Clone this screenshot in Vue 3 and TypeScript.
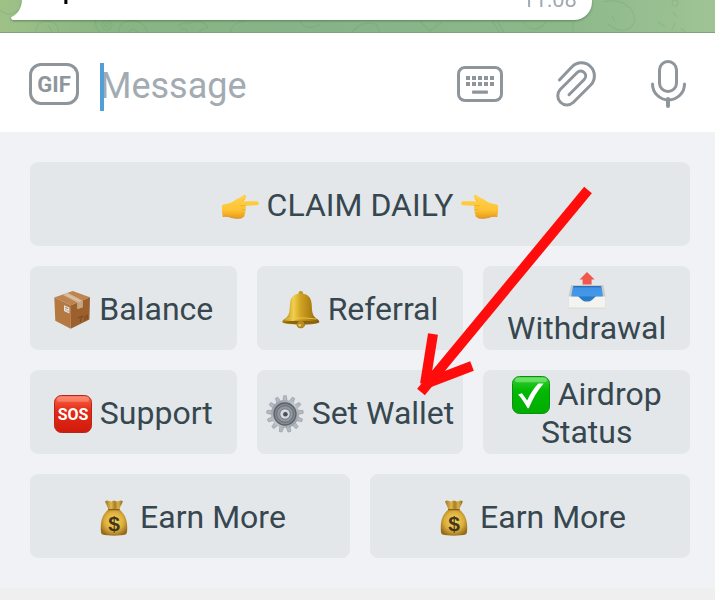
<script setup lang="ts">
import { ref } from 'vue'

interface Mark {
  text: string
  x: number
  y: number
  kind: string
}

interface Key {
  icon: string
  alt: string
  label: string
  mark?: Mark
  trailing?: { icon: string; alt: string }
}

const draft = ref('')

const sosMark: Mark = { text: 'SOS', x: 19, y: 25, kind: 'mark-sos' }
const dollarMark: Mark = { text: '$', x: 20, y: 32, kind: 'mark-dollar' }

const rows: Key[][] = [
  [{ icon: 'point-right', alt: '👉', label: 'CLAIM DAILY', trailing: { icon: 'point-left', alt: '👈' } }],
  [
    { icon: 'package', alt: '📦', label: 'Balance' },
    { icon: 'bell', alt: '🔔', label: 'Referral' },
    { icon: 'outbox', alt: '📤', label: 'Withdrawal' },
  ],
  [
    { icon: 'sos', alt: '🆘', label: 'Support', mark: sosMark },
    { icon: 'gear', alt: '⚙️', label: 'Set Wallet' },
    { icon: 'check', alt: '✅', label: 'Airdrop Status' },
  ],
  [
    { icon: 'bag', alt: '💰', label: 'Earn More', mark: dollarMark },
    { icon: 'bag', alt: '💰', label: 'Earn More', mark: dollarMark },
  ],
]

const teeth: number[] = Array.from({ length: 13 }, (_, i) => (i * 360) / 13)
const keyColumns: number[] = [9, 15, 21, 27, 33]
</script>

<template>
  <main class="screen">
    <svg class="sprites" aria-hidden="true">
      <defs>
        <linearGradient id="g-hand" x1="0" y1="0" x2="0" y2="1">
          <stop offset="0" stop-color="#ffd44a" />
          <stop offset="0.65" stop-color="#fdc334" />
          <stop offset="1" stop-color="#e99a1c" />
        </linearGradient>
        <linearGradient id="g-bell" x1="0" y1="0" x2="1" y2="0">
          <stop offset="0" stop-color="#a87a10" />
          <stop offset="0.3" stop-color="#f1cf4c" />
          <stop offset="0.5" stop-color="#d0a222" />
          <stop offset="0.8" stop-color="#aa7c12" />
          <stop offset="1" stop-color="#7c5508" />
        </linearGradient>
        <linearGradient id="g-red" x1="0" y1="0" x2="0" y2="1">
          <stop offset="0" stop-color="#ff7a62" />
          <stop offset="0.2" stop-color="#f04a30" />
          <stop offset="0.4" stop-color="#e52b16" />
          <stop offset="1" stop-color="#cf1a0c" />
        </linearGradient>
        <linearGradient id="g-green" x1="0" y1="0" x2="0" y2="1">
          <stop offset="0" stop-color="#4fd84c" />
          <stop offset="0.18" stop-color="#1fc51d" />
          <stop offset="0.4" stop-color="#02b803" />
          <stop offset="1" stop-color="#01ad02" />
        </linearGradient>
        <linearGradient id="g-gear" x1="0" y1="0" x2="1" y2="1">
          <stop offset="0" stop-color="#8a9097" />
          <stop offset="0.5" stop-color="#c3c8ce" />
          <stop offset="1" stop-color="#8e949b" />
        </linearGradient>
        <linearGradient id="g-blue" x1="0" y1="0" x2="0" y2="1">
          <stop offset="0" stop-color="#3f93e6" />
          <stop offset="0.5" stop-color="#4597e8" />
          <stop offset="0.6" stop-color="#2878c4" />
          <stop offset="1" stop-color="#2c86d4" />
        </linearGradient>
        <radialGradient id="g-bag" cx="0.5" cy="0.45" r="0.6">
          <stop offset="0" stop-color="#f7d863" />
          <stop offset="0.6" stop-color="#dcae3c" />
          <stop offset="1" stop-color="#94691a" />
        </radialGradient>
        <linearGradient id="g-neck" x1="0" y1="0" x2="1" y2="0">
          <stop offset="0" stop-color="#9b7323" />
          <stop offset="0.35" stop-color="#e0b84e" />
          <stop offset="0.55" stop-color="#a87d28" />
          <stop offset="0.75" stop-color="#dab045" />
          <stop offset="1" stop-color="#8c641a" />
        </linearGradient>
      </defs>

      <symbol id="emoji-point-right" viewBox="0 0 38 38">
        <path d="M1.2 18C4 16.8 8 16.6 11 15.2C14 13.6 16 11.6 19 10.6C21 9.6 22.5 7.6 24 7.8C25.8 8.2 25.2 10.4 24 11.8L21.8 14.2H36C38.4 14.4 38.4 18 36 18.2L24.4 18.7C25.4 20 25.2 21.6 24.2 22.4C25 24 24.6 25.6 23.6 26.4C24 28.4 23.4 30.6 20.6 31C16 31.6 11.6 31.2 8.4 29.8C6.4 29 4 29.4 1.8 29.4C.8 26 .8 21.4 1.2 18Z" fill="url(#g-hand)" />
        <path d="M24.4 18.7H19.5M24.2 22.5H21M23.6 26.5H21M24 11.8L21.4 14.4" fill="none" stroke="#e9a82a" stroke-width="0.7" stroke-linecap="round" />
        <path d="M1.8 29.4C4 29.4 6.4 29 8.4 29.8C11.6 31.2 16 31.6 20.6 31" fill="none" stroke="#dc8c1c" stroke-width="0.9" />
      </symbol>
      <symbol id="emoji-point-left" viewBox="0 0 38 38">
        <use href="#emoji-point-right" width="38" height="38" transform="translate(38 0) scale(-1 1)" />
      </symbol>

      <symbol id="emoji-package" viewBox="0 0 38 38">
        <path d="M19.7 0L37 6.3L18 14.2L1.3 6.5Z" fill="#bd8450" />
        <path d="M1.3 6.5L18 14.2L17.7 37.8L2.3 29.8Z" fill="#b57840" />
        <path d="M37 6.3L18 14.2L17.7 37.8L36.4 28.4Z" fill="#9b602d" />
        <path d="M9.6 3.8L14.6 1.8L29.6 9.4V16.2L24.4 18V11.5Z" fill="#d3b694" />
        <path d="M24.4 11.5L29.6 9.4V16.2L24.4 18Z" fill="#c7a67f" />
        <path d="M12.2 2.8L26.8 10.4" stroke="#dfcab0" stroke-width="0.8" />
        <path d="M11 14.2L16.4 16.4V22.4L11 20Z" fill="#e9e5df" />
        <path d="M12.2 16.4L15.2 17.6M12.2 18.6L13.4 19.1M14.4 19.8L15.6 20.3" stroke="#77706a" stroke-width="0.9" />
        <path d="M25 27L29.6 25.2L27.4 28.6V31M32 24.4V29.4M34.2 23.4V28.4" fill="none" stroke="#6d4320" stroke-width="0.8" />
      </symbol>

      <symbol id="emoji-bell" viewBox="0 0 38 38">
        <rect x="16.5" y="0" width="4.6" height="5" rx="2.2" fill="#c29524" />
        <circle cx="18.8" cy="33" r="4.3" fill="#8a6110" />
        <path d="M18.8 2.6C12 2.6 8.6 6.4 8 12.4C7.4 19 8.2 24 2.6 28C.8 29.2 0 30.2 .4 31.4C6 34.4 31.6 34.4 37.2 31.4C37.6 30.2 36.8 29.2 35 28C29.4 24 30.2 19 29.6 12.4C29 6.4 25.6 2.6 18.8 2.6Z" fill="url(#g-bell)" />
        <path d="M.6 31C7 29.4 30.6 29.4 37 31C31.6 34.2 6 34.2 .6 31Z" fill="#8c640d" />
        <path d="M3.4 28.2C10 26.6 27.6 26.6 34.2 28.2" fill="none" stroke="#e9c752" stroke-width="0.9" />
        <ellipse cx="18.8" cy="33.4" rx="3.6" ry="3.4" fill="#b98c22" />
        <ellipse cx="17.8" cy="34.2" rx="1.4" ry="1.2" fill="#ecca5a" />
      </symbol>

      <symbol id="emoji-outbox" viewBox="0 0 38 38">
        <path d="M3 13H35.4L37.4 24V36.4H.6V24Z" fill="#c9cbc9" />
        <path d="M5 14H33.4L35 24.6L29 27L19 33L9 27L3.2 24.6Z" fill="url(#g-blue)" />
        <path d="M5.6 14H32.8V15.4H5.6Z" fill="#2d70ba" />
        <path d="M.6 24.4H9.6C12.4 24.6 13 29.6 19 29.6C25 29.6 25.6 24.6 28.4 24.4H37.4V35.4Q37.4 36.4 36.4 36.4H1.6Q.6 36.4 .6 35.4Z" fill="#f3f3f0" />
        <path d="M1 36H37" stroke="#d4d4d0" stroke-width="0.8" />
        <path d="M19 0L26.6 7.6H23.6V12.4H14.6V7.6H11.6Z" fill="#f0574f" />
      </symbol>

      <symbol id="emoji-sos" viewBox="0 0 38 38">
        <rect x="0.5" y="0.5" width="37" height="37" rx="7" fill="url(#g-red)" stroke="#b3261a" />
        <rect x="3" y="1.8" width="32" height="5" rx="2.5" fill="#ff9c86" opacity="0.5" />
      </symbol>

      <symbol id="emoji-gear" viewBox="0 0 38 38">
        <path v-for="angle in teeth" :key="angle" d="M16.8 6.4L17.6 .7H20.4L21.2 6.4Z" :transform="`rotate(${angle} 19 19)`" fill="#b4bac1" stroke="#7c828a" stroke-width="0.4" />
        <circle cx="19" cy="19" r="14" fill="url(#g-gear)" />
        <circle cx="19" cy="19" r="11" fill="#858b92" stroke="#5d6269" stroke-width="1.3" />
        <circle cx="19" cy="19" r="8.4" fill="#9298a0" stroke="#666b72" stroke-width="1" />
        <circle cx="19" cy="19" r="5.2" fill="#d6dade" stroke="#6a7077" stroke-width="0.8" />
        <circle cx="19.4" cy="19.2" r="2.3" fill="#4a4f55" />
      </symbol>

      <symbol id="emoji-check" viewBox="0 0 38 38">
        <rect x="0.5" y="0.5" width="37" height="37" rx="7" fill="url(#g-green)" stroke="#0c8f10" />
        <rect x="3" y="1.8" width="32" height="4.4" rx="2.2" fill="#9af096" opacity="0.5" />
        <path d="M6 18.4L10 17.2L15.2 24.6C18 18 22 11.6 26.4 7.4H31.6C25.6 14.4 20.8 22.4 16.8 32.2H15.6C12.8 27 9.8 22.4 6 18.4Z" fill="#fff" />
      </symbol>

      <symbol id="emoji-bag" viewBox="0 0 38 38">
        <path d="M11 2.4Q13 1 15 2Q17.6 3 20 1.6Q22.4 3 25 2Q27 1 28.8 2.2C28 5.6 25.6 7.6 25.2 11.6H14.4C14 7.6 12 5.6 11 2.4Z" fill="url(#g-neck)" />
        <path d="M14.4 10.4H25.4C30 14 33.2 20 33.2 27.4C33.2 31 33.4 34.4 31.4 35.6C27.6 37 12.4 37 8.6 35.6C6.6 34.4 6.8 31 6.8 27.4C6.8 20 9.8 14 14.4 10.4Z" fill="url(#g-bag)" />
        <path d="M14.2 10.6H25.6" stroke="#8b6317" stroke-width="1.2" />
      </symbol>
    </svg>

    <section class="chat">
      <svg class="doodles" viewBox="0 0 715 33" preserveAspectRatio="xMidYMin slice" aria-hidden="true">
        <g fill="none" stroke="#5f9463" stroke-opacity="0.2" stroke-width="1.2">
          <path d="M0 10Q8 18 18 10M36 32Q36 22 46 21Q60 22 58 33M48 25L53 33" />
          <circle cx="107" cy="25" r="5" />
          <circle cx="107" cy="25" r="2" />
          <path d="M95 20Q96 32 103 33M119 33Q118 22 130 21Q144 20 148 33M129 33Q131 26 138 32" />
          <path d="M178 27Q180 22 190 23Q198 19 205 24Q212 28 202 29L198 33M186 33Q190 28 179 29M230 33Q232 22 246 21" />
          <path d="M300 21Q306 32 320 24M352 33Q360 20 376 24L380 33M420 21L430 31L442 22" />
          <path d="M492 21L500 33M497 21L504 32M523 22Q534 36 546 22M573 21V33" />
          <path d="M603 2Q620 -2 630 8Q640 22 628 29Q618 33 608 24M612 16L615 22M658 22L665 27M672 3A3 3 0 1 0 678 3A3 3 0 1 0 672 3M673 12L677 17M675 23L672 29M681 28L686 33" />
        </g>
      </svg>
      <div class="message">
        <svg class="tail" width="12" height="20" viewBox="0 0 12 20" aria-hidden="true">
          <path d="M12 0C11.4 8 8 14.4 1.4 17Q.2 18.6 2.6 20H12Z" fill="#fff" />
        </svg>
        <div class="bubble">
          <span class="body">p</span>
          <time class="time">11:08</time>
        </div>
      </div>
    </section>

    <form class="composer" @submit.prevent>
      <button class="gif" type="button">GIF</button>
      <label class="field">
        <input v-model="draft" type="text" placeholder="Message" aria-label="Message" />
      </label>
      <div class="tools">
        <button class="tool" type="button" aria-label="Keyboard">
          <svg width="48" height="48" viewBox="0 0 48 48" aria-hidden="true">
            <rect x="1.5" y="7.5" width="43" height="33" rx="6.5" fill="none" stroke="currentColor" stroke-width="3" />
            <g fill="currentColor">
              <rect v-for="x in keyColumns" :key="`a${x}`" :x="x" y="16" width="4" height="4" />
              <rect v-for="x in keyColumns" :key="`b${x}`" :x="x" y="22" width="4" height="4" />
              <rect x="15" y="30.6" width="16" height="3.2" rx="1" />
            </g>
          </svg>
        </button>
        <button class="tool" type="button" aria-label="Attach">
          <svg width="48" height="48" viewBox="0 0 48 48" aria-hidden="true">
            <path d="M8.4 20L21 6.8A13 13 0 0 1 39.7 25L22.2 42.5A9.2 9.2 0 0 1 9.2 29.5L26.2 12.5A4.95 4.95 0 0 1 33.2 19.5L18 34.7" fill="none" stroke="currentColor" stroke-width="3" stroke-linecap="round" />
          </svg>
        </button>
        <button class="tool" type="button" aria-label="Voice message">
          <svg width="48" height="48" viewBox="0 0 48 48" aria-hidden="true">
            <g fill="none" stroke="currentColor" stroke-width="3" stroke-linecap="round">
              <rect x="14.5" y="1.5" width="17" height="30" rx="8.5" />
              <path d="M7.5 24A15.6 15.6 0 0 0 39.5 24" />
              <path d="M23 39V46" stroke-width="4" />
            </g>
          </svg>
        </button>
      </div>
    </form>

    <section class="keyboard">
      <div v-for="(row, r) in rows" :key="r" class="row">
        <button v-for="(key, k) in row" :key="k" class="key" type="button">
          <span class="caption">
            <svg class="emoji" viewBox="0 0 38 38" role="img" :aria-label="key.alt">
              <use :href="`#emoji-${key.icon}`" width="38" height="38" />
              <text v-if="key.mark" :class="key.mark.kind" :x="key.mark.x" :y="key.mark.y" text-anchor="middle">{{ key.mark.text }}</text>
            </svg>
            {{ key.label }}
            <svg v-if="key.trailing" class="emoji" viewBox="0 0 38 38" role="img" :aria-label="key.trailing.alt">
              <use :href="`#emoji-${key.trailing.icon}`" width="38" height="38" />
            </svg>
          </span>
        </button>
      </div>
      <svg class="pointer" width="180" height="216" viewBox="0 0 180 216" aria-hidden="true">
        <g stroke="#ff0d0d" stroke-width="10">
          <path d="M173 5L6 207" />
          <path d="M18 149L10 199" />
          <path d="M57 181L10 199" />
        </g>
      </svg>
    </section>
  </main>
</template>

<style>
body {
  margin: 0;
  background: #efefef;
}
</style>

<style scoped>
.screen {
  font-family: Roboto, 'Noto Sans', sans-serif;
  overflow: hidden;
}

.sprites {
  position: absolute;
  width: 0;
  height: 0;
}

.chat {
  position: relative;
  box-sizing: border-box;
  height: 33px;
  overflow: hidden;
  border-bottom: 1px solid #7fa17b;
  background: linear-gradient(90deg, #9fc187 0%, #8ab584 14%, #86b388 45%, #8cb88a 78%, #9fc394 100%);
}

.doodles {
  position: absolute;
  inset: 0;
  width: 100%;
  height: 33px;
}

.message {
  position: relative;
  display: flex;
  height: 20px;
  margin: 0 123px 0 10px;
  filter: drop-shadow(0 1px 1px rgba(60, 100, 60, 0.6));
}

.tail {
  flex: none;
}

.bubble {
  flex: 1;
  display: flex;
  align-items: flex-end;
  justify-content: space-between;
  box-sizing: border-box;
  height: 20px;
  padding: 0 15px 0 40px;
  overflow: hidden;
  border-bottom-right-radius: 18px;
  background: #fff;
}

.body {
  padding-bottom: 15px;
  font-size: 34px;
  line-height: 40px;
  color: #000;
}

.time {
  padding-bottom: 7px;
  font-size: 22px;
  line-height: 26px;
  color: #a1aab3;
}

.composer {
  display: flex;
  align-items: center;
  box-sizing: border-box;
  height: 99px;
  padding: 3px 22px 0 29px;
  background: #fff;
}

button {
  margin: 0;
  padding: 0;
  border: 0;
  background: none;
  font-family: inherit;
  cursor: pointer;
}

.gif {
  flex: none;
  box-sizing: border-box;
  width: 50px;
  height: 42px;
  padding-top: 2px;
  border: 3px solid #8e959b;
  border-radius: 12px;
  font-size: 22px;
  font-weight: 700;
  line-height: 34px;
  color: #8e959b;
}

.field {
  position: relative;
  flex: 1;
  display: flex;
  min-width: 0;
  margin-left: 21px;
  padding-top: 6px;
}

.field::before {
  content: '';
  position: absolute;
  top: 6px;
  left: 0;
  width: 4px;
  height: 48px;
  background: #519fd9;
}

.field input {
  box-sizing: border-box;
  width: 100%;
  height: 48px;
  padding: 0 0 2px;
  border: 0;
  outline: 0;
  background: none;
  font-family: inherit;
  font-size: 36px;
  color: #222;
  caret-color: transparent;
}

.field input::placeholder {
  color: #a3abb2;
  opacity: 1;
}

.tools {
  display: flex;
  gap: 46px;
}

.tool {
  width: 48px;
  height: 48px;
  color: #8e959b;
}

.tool svg {
  display: block;
}

.keyboard {
  position: relative;
  display: flex;
  flex-direction: column;
  gap: 20px;
  padding: 30px 25px 30px 30px;
  background: #f0f2f6;
}

.row {
  display: flex;
  gap: 20px;
}

.key {
  flex: 1 1 0;
  display: flex;
  align-items: center;
  justify-content: center;
  min-width: 0;
  min-height: 84px;
  padding: 5px 6px 3px;
  border-radius: 8px;
  background: #e3e7ea;
  font-size: 32px;
  line-height: 38px;
  text-align: center;
  color: #37474f;
}

.emoji {
  width: 38px;
  height: 38px;
  margin: -4px 0;
  vertical-align: -5px;
}

.mark-sos {
  font-size: 16px;
  font-weight: 700;
  fill: #fff;
}

.mark-dollar {
  font-family: 'Liberation Sans', Arial, sans-serif;
  font-size: 21px;
  font-weight: 700;
  fill: #42351a;
}

.pointer {
  position: absolute;
  top: 53px;
  left: 415px;
  pointer-events: none;
}
</style>
